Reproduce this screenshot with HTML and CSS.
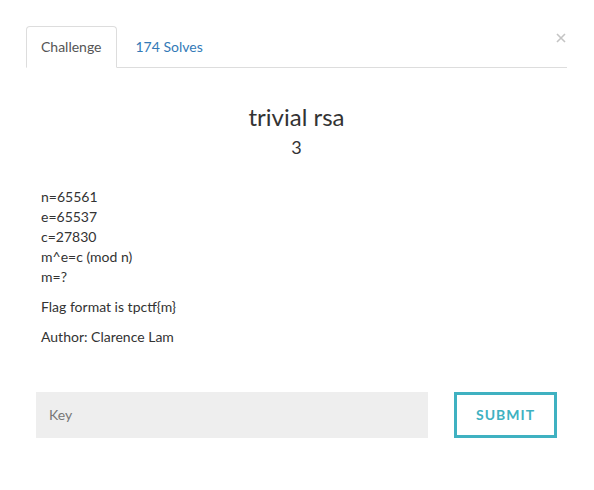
FILE: index.html
```html
<!DOCTYPE html>
<html>
<head>
<meta charset="utf-8">
<link rel="stylesheet" href="styles.css">
</head>
<body>
<div class="modal">
  <div class="tabs">
    <div class="tab active">Challenge</div>
    <div class="tab link">174 Solves</div>
    <svg class="close" width="10" height="10" viewBox="0 0 10 10"><path d="M1 1L9 9M9 1L1 9" stroke="#c4c4c4" stroke-width="1.6" fill="none"/></svg>
  </div>
  <h1 class="title">trivial rsa</h1>
  <h2 class="value">3</h2>
  <div class="desc">
    <p class="lines">n=65561<br>e=65537<br>c=27830<br>m^e=c (mod n)<br>m=?</p>
    <p>Flag format is tpctf{m}</p>
    <p>Author: Clarence Lam</p>
  </div>
  <div class="form">
    <div class="input">Key</div>
    <div class="submit">SUBMIT</div>
  </div>
</div>
</body>
</html>
```
FILE: styles.css
```css
html, body { margin: 0; padding: 0; background: #fff; }
body { font-family: Lato, "Open Sans", sans-serif; color: #333; font-size: 14px; }
.modal { padding: 26px 27px 0 26px; width: 541px; }
.tabs { display: flex; align-items: flex-end; border-bottom: 1px solid #ddd; height: 41px; position: relative; }
.tab { height: 40px; line-height: 40px; padding: 0 15px; font-size: 14px; box-sizing: border-box; }
.tab.active { border: 1px solid #ddd; border-bottom: 1px solid #fff; border-radius: 4px 4px 0 0; margin-bottom: -1px; height: 42px; line-height: 40px; color: #555; padding: 0 14px; }
.tab.link { color: #337ab7; padding: 0 19px; }
.close { position: absolute; right: 1px; top: 7px; }
.title { margin: 34px 0 0; text-align: center; font-size: 24px; font-weight: 400; line-height: 30px; color: #333; }
.value { margin: 4px 0 0; text-align: center; font-size: 18px; font-weight: 400; line-height: 22px; color: #333; }
.desc { padding: 0 0 0 15px; margin-top: 29px; }
.desc p { margin: 0 0 10px; line-height: 20px; }
.form { display: flex; margin: 45px 0 0 10px; gap: 26px; }
.input { width: 392px; height: 46px; background: #eee; box-sizing: border-box; padding-left: 13px; line-height: 46px; color: #777; font-size: 14px; }
.submit { width: 103px; height: 46px; box-sizing: border-box; border: 3px solid #3fb1c1; color: #3fb1c1; text-align: center; line-height: 40px; font-size: 14px; font-weight: 700; letter-spacing: 1px; }
```
